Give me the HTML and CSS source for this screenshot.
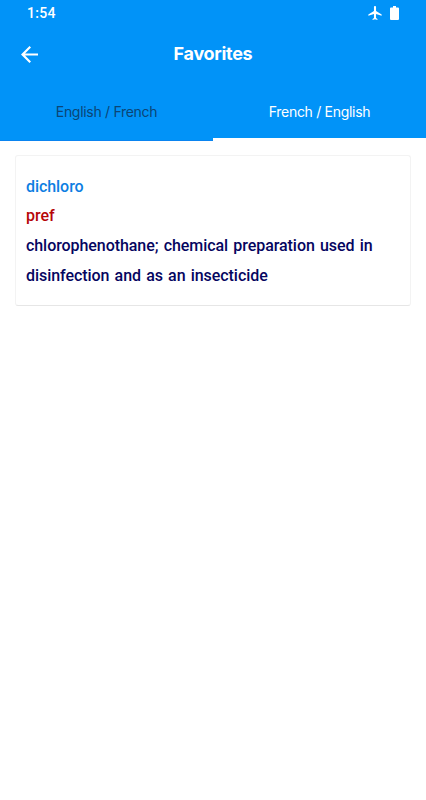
FILE: index.html
```html
<!DOCTYPE html>
<html lang="en">
<head>
<meta charset="utf-8">
<title>Favorites</title>
<link rel="stylesheet" href="styles.css">
</head>
<body>
<header class="header">
  <div class="status">
    <span class="clock">1:54</span>
    <svg class="plane" viewBox="2 2 19 20"><path d="M21 16v-2l-8-5V3.500C13 2.670 12.330 2 11.500 2S10 2.670 10 3.500V9l-8 5v2l8-2.500V19l-2 1.500V22l3.500-1 3.500 1v-1.500L13 19v-5.500z"/></svg>
    <svg class="battery" viewBox="0 0 9 14"><path d="M1 1.500h2V0h3v1.500h2q1 0 1 1V13q0 1-1 1H1q-1 0-1-1V2.500q0-1 1-1z"/></svg>
  </div>
  <div class="toolbar">
    <svg class="back" viewBox="4 4 16 16"><path d="M20 11H7.830l5.590-5.590L12 4l-8 8 8 8 1.410-1.410L7.830 13H20z"/></svg>
    <h1 class="title">Favorites</h1>
  </div>
  <nav class="tabs">
    <a class="tab tab-idle"><span>English / French</span></a>
    <a class="tab tab-active"><span>French / English</span></a>
  </nav>
</header>
<main>
  <article class="card">
    <p class="word">dichloro</p>
    <p class="kind">pref</p>
    <p class="meaning">chlorophenothane; chemical preparation used in disinfection and as an insecticide</p>
  </article>
</main>
</body>
</html>
```
FILE: styles.css
```css
* { box-sizing: border-box; }
body { margin: 0; background: #fff; font-family: Roboto, sans-serif; }
svg { display: block; fill: #fff; }
.header { background: #0193f8; color: #fff; height: 141px; }
.status { display: flex; align-items: center; height: 26px; padding: 0 27px; }
.clock { font-size: 14px; font-weight: 500; letter-spacing: .3px; flex: 1; }
.plane { width: 14px; height: 14px; margin-right: 8px; }
.battery { width: 9px; height: 14px; }
.toolbar { display: grid; grid-template-columns: 40px 1fr 40px; align-items: center; height: 56px; padding: 0 0 0 21px; }
.back { width: 17px; height: 17px; }
.title { margin: 0; padding-right: 21px; text-align: center; font: 700 18px/24px Inter, sans-serif; letter-spacing: -.3px; }
.tabs { display: grid; grid-template-columns: 1fr 1fr; height: 59px; font: 400 14px/20px Inter, sans-serif; letter-spacing: -.3px; }
.tab { display: flex; align-items: center; justify-content: center; }
.tab-idle { color: #0b4575; border-bottom: 1px solid #0a84f0; padding-top: 1px; }
.tab-active { border-bottom: 3px solid #fff; padding-top: 3px; }
.card { width: 396px; height: 151px; margin: 14px 0 0 15px; padding: 17px 10px 10px; border: 1px solid #f3f3f3; border-bottom-color: #e6e6e6; border-radius: 3px; font-size: 16px; font-weight: 500; line-height: 30px; word-spacing: 1.300px; letter-spacing: -.06px; }
.card p { margin: 0; }
.card .word { color: #0d7ee2; line-height: 28px; }
.kind { color: #b60508; }
.meaning { color: #050560; }
```
